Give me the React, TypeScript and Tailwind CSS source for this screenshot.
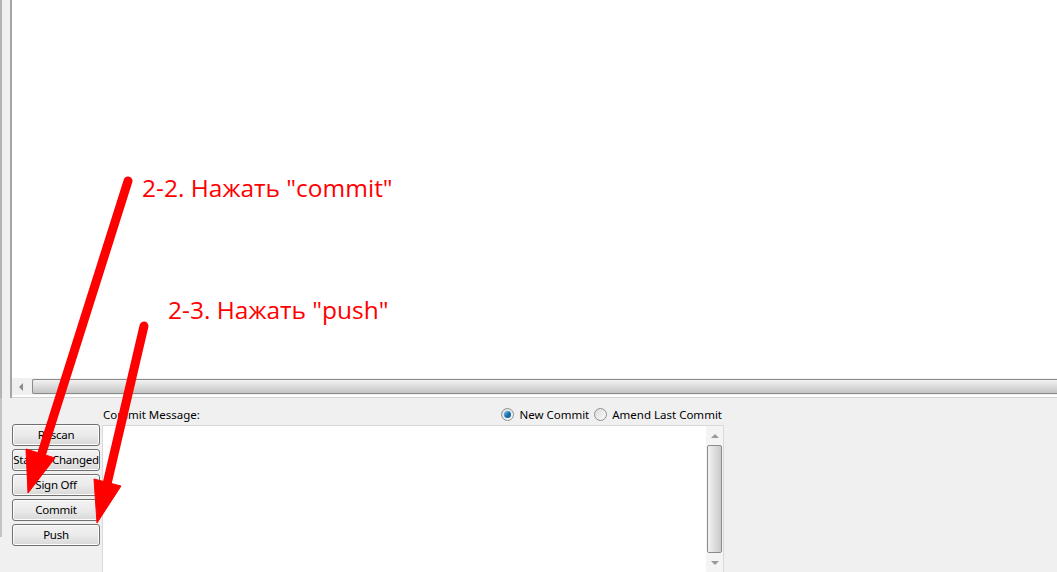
import React from 'react';

const ui = { fontFamily: '"Noto Sans", "Open Sans", sans-serif' };
const note = { fontFamily: '"Open Sans", "Noto Sans", sans-serif' };

const buttons = ['Rescan', 'Staged Changed', 'Sign Off', 'Commit', 'Push'];

const WinButton = ({ label }: { label: string }) => (
  <button
    className="h-[22px] w-[88px] whitespace-nowrap rounded-[3px] border border-[#707070] bg-gradient-to-b from-[#f2f2f2] via-[#ebebeb] to-[#d8d8d8] text-[11.5px] leading-none tracking-[-0.25px] text-black shadow-[inset_0_0_0_1px_#fcfcfc]"
    style={ui}
  >
    {label}
  </button>
);

const Radio = ({ checked, label }: { checked?: boolean; label: string }) => (
  <label className="flex items-center gap-[5px]">
    <span className="flex size-[13px] items-center justify-center rounded-full border border-[#8e8f8f] bg-gradient-to-br from-[#dcdcdc] to-[#fafafa]">
      {checked && (
        <span className="size-[7px] rounded-full bg-gradient-to-br from-[#7cc4ee] via-[#1f78b4] to-[#0d4f80]" />
      )}
    </span>
    <span>{label}</span>
  </label>
);

const Arrows = () => (
  <svg className="pointer-events-none absolute inset-0" width={1057} height={572}>
    <g fill="#ff0000" stroke="#ff0000">
      <line x1={128} y1={181} x2={41} y2={456} strokeWidth={9} strokeLinecap="round" />
      <polygon points="28,493 26,449 55,458" strokeWidth={1} strokeLinejoin="round" />
      <line x1={144} y1={326} x2={107} y2={484} strokeWidth={9} strokeLinecap="round" />
      <polygon points="97,523 94,479 121,486" strokeWidth={1} strokeLinejoin="round" />
    </g>
  </svg>
);

export default function App() {
  return (
    <div className="relative flex h-[572px] w-[1057px] flex-col overflow-hidden bg-[#f0f0f0]">
      {/* top pane: diff view */}
      <div className="flex h-[398px]">
        <div className="w-[10px] border-l-2 border-[#b4b4b4] bg-[#f0f0f0]" />
        <div className="flex flex-1 flex-col border-l-2 border-[#a5a5a5]">
          <div className="flex-1 bg-white" />
          <div className="flex h-[17px] items-center bg-[#f0f0f0]">
            <div className="flex w-[18px] justify-center">
              <span className="h-0 w-0 border-y-[4px] border-r-[4px] border-y-transparent border-r-[#8a8a8a]" />
            </div>
            <div className="ml-[2px] h-[15px] flex-1 rounded-l-[2px] border border-r-0 border-[#8b8b8b] bg-gradient-to-b from-[#f2f2f2] via-[#dcdcdc] to-[#c4c4c4]" />
          </div>
          <div className="h-[3px] border-b border-[#d4d4d4] bg-white" />
        </div>
      </div>

      {/* bottom pane: commit area */}
      <div className="flex flex-1">
        <div className="mb-[35px] w-[12px] border-l-2 border-[#c4c4c4]" />
        <div className="flex flex-col gap-[3px] pt-[26px]">
          {buttons.map((b) => (
            <WinButton key={b} label={b} />
          ))}
        </div>
        <div className="ml-[2px] flex w-[622px] flex-col text-[11.5px] text-black" style={ui}>
          <div className="flex h-[27px] items-center justify-between pl-[1px] pt-[6px]">
            <span>Commit Message:</span>
            <div className="flex items-center gap-[5px] pr-[2px]">
              <Radio checked label="New Commit" />
              <Radio label="Amend Last Commit" />
            </div>
          </div>
          <div className="flex flex-1 border-l border-t border-r border-[#d9d9d9] bg-white">
            <div className="flex-1" />
            <div className="flex w-[17px] flex-col bg-[#f4f4f4]">
              <div className="flex h-[19px] items-center justify-center">
                <span className="h-0 w-0 border-x-[4px] border-b-[4px] border-x-transparent border-b-[#9a9a9a]" />
              </div>
              <div className="mx-[1px] flex-1 rounded-[2px] border border-[#8b8b8b] bg-gradient-to-r from-[#f2f2f2] via-[#dedede] to-[#cacaca]" />
              <div className="flex h-[19px] items-center justify-center">
                <span className="h-0 w-0 border-x-[4px] border-t-[4px] border-x-transparent border-t-[#9a9a9a]" />
              </div>
            </div>
          </div>
        </div>
        <div className="flex-1" />
      </div>

      {/* annotations */}
      <div className="pointer-events-none absolute left-[142px] top-[170px] text-[24.5px] text-[#ff0000]" style={note}>
        2-2. Нажать "commit"
      </div>
      <div className="pointer-events-none absolute left-[168px] top-[292px] text-[24.5px] text-[#ff0000]" style={note}>
        2-3. Нажать "push"
      </div>
      <Arrows />
    </div>
  );
}
